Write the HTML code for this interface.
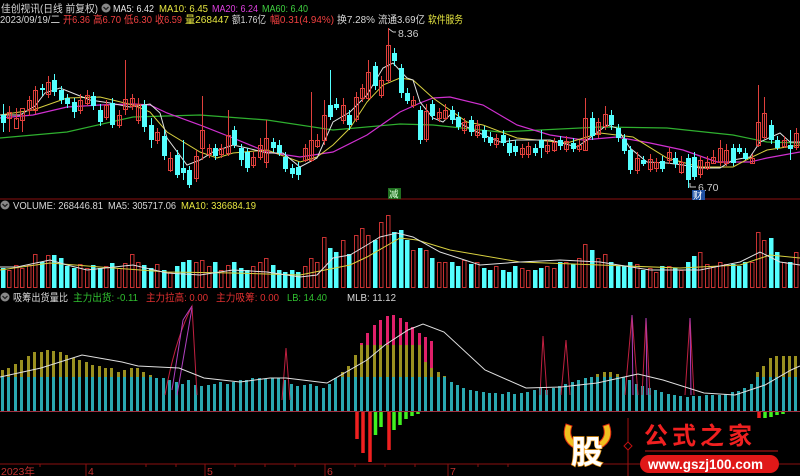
<!DOCTYPE html>
<html><head><meta charset="utf-8"><style>
html,body{margin:0;padding:0;background:#000;}
svg{display:block}
text{font-family:"Liberation Sans","Noto Sans CJK SC",sans-serif;font-size:10.5px}
.r{fill:none;stroke:#e0403c;stroke-width:1}
.c{fill:#54ffff}
.vr{fill:none;stroke:#c83232;stroke-width:1}
.vc{fill:#54ffff}
</style></head><body>
<svg width="800" height="476" viewBox="0 0 800 476" xmlns="http://www.w3.org/2000/svg">
<rect width="800" height="476" fill="#000"/>
<!-- headers -->
<text x="1" y="12" fill="#d8d8d8" textLength="97" lengthAdjust="spacingAndGlyphs">佳创视讯(日线 前复权)</text>
<circle cx="106" cy="8" r="4.5" fill="#888"/><path d="M103.5 7 L106 9.5 L108.5 7" stroke="#222" fill="none" stroke-width="1.3"/>
<text x="113" y="12" fill="#e8e8e8" textLength="41" lengthAdjust="spacingAndGlyphs">MA5: 6.42</text>
<text x="159" y="12" fill="#e6e640" textLength="49" lengthAdjust="spacingAndGlyphs">MA10: 6.45</text>
<text x="212" y="12" fill="#e040e0" textLength="46" lengthAdjust="spacingAndGlyphs">MA20: 6.24</text>
<text x="262" y="12" fill="#40d040" textLength="46" lengthAdjust="spacingAndGlyphs">MA60: 6.40</text>
<text x="0" y="23" fill="#d8d8d8" textLength="60" lengthAdjust="spacingAndGlyphs">2023/09/19/二</text>
<text x="63" y="23" fill="#f04040" textLength="27" lengthAdjust="spacingAndGlyphs">开6.36</text>
<text x="93" y="23" fill="#f04040" textLength="28" lengthAdjust="spacingAndGlyphs">高6.70</text>
<text x="124" y="23" fill="#f04040" textLength="28" lengthAdjust="spacingAndGlyphs">低6.30</text>
<text x="155" y="23" fill="#f04040" textLength="27" lengthAdjust="spacingAndGlyphs">收6.59</text>
<text x="185" y="23" fill="#e6e640" textLength="44" lengthAdjust="spacingAndGlyphs">量268447</text>
<text x="232" y="23" fill="#d8d8d8" textLength="34" lengthAdjust="spacingAndGlyphs">额1.76亿</text>
<text x="270" y="23" fill="#f04040" textLength="64" lengthAdjust="spacingAndGlyphs">幅0.31(4.94%)</text>
<text x="337" y="23" fill="#d8d8d8" textLength="38" lengthAdjust="spacingAndGlyphs">换7.28%</text>
<text x="378" y="23" fill="#d8d8d8" textLength="47" lengthAdjust="spacingAndGlyphs">流通3.69亿</text>
<text x="428" y="23" fill="#e6e640" textLength="35" lengthAdjust="spacingAndGlyphs">软件服务</text>

<!-- panel separators -->
<line x1="0" y1="199" x2="800" y2="199" stroke="#8a1010" stroke-width="1"/>
<line x1="0" y1="464" x2="800" y2="464" stroke="#8a1010" stroke-width="1"/>

<!-- MA lines main -->
<polyline fill="none" stroke="#2fb02f" stroke-width="1.2" points="0,138 67,132 133,117 200,115 267,120 333,130 400,124 433,125 500,132 600,127 667,128 733,135 767,142 800,143"/>
<polyline fill="none" stroke="#d030d0" stroke-width="1.2" points="0,118 33,115 67,107 100,105 133,104 150,105 167,113 200,125 233,138 267,152 300,157 333,152 367,135 400,112 420,103 433,98 450,97 483,105 517,125 550,135 583,140 617,137 650,143 683,150 717,162 750,162 767,158 800,152"/>
<polyline fill="none" stroke="#d8d040" stroke-width="1" points="0,115 33,110 67,98 100,97 133,105 150,112 167,132 200,152 217,158 233,153 267,150 300,162 317,157 333,145 350,128 367,102 383,85 400,78 413,80 433,98 467,122 483,125 517,138 567,143 600,133 633,137 667,158 700,167 733,167 750,158 767,150 800,145"/>
<polyline fill="none" stroke="#e0e0e0" stroke-width="1" points="0,115 20,115 35,106 45,93 60,88 70,92 90,100 110,103 130,107 150,104 160,113 167,138 187,165 200,160 213,152 233,145 247,148 267,153 283,153 300,167 317,158 333,122 350,112 367,95 383,68 393,63 407,78 413,80 420,102 433,118 443,122 450,115 463,125 477,132 500,142 517,140 550,140 577,147 587,140 607,125 617,128 630,148 647,162 667,163 683,165 700,168 720,168 733,160 750,157 760,142 780,133 790,142 800,142"/>

<!-- wicks -->
<path stroke="#e0403c" stroke-width="1" d="M9.5 106v26M16.5 108v12M22.5 114v18M29.5 96v20M35.5 86v28M48.5 76v22M80.5 94v20M87.5 90v16M106.5 100v20M119.5 110v18M125.5 60v55M132.5 94v16M138.5 98v26M157.5 128v16M170.5 152v20M196.5 150v32M202.5 96v64M209.5 144v14M221.5 144v14M228.5 110v46M253.5 152v16M260.5 138v22M266.5 120v48M305.5 144v18M311.5 92v70M317.5 134v14M324.5 100v45M343.5 98v26M356.5 92v30M362.5 84v18M368.5 60v40M381.5 76v22M388.5 28v55M413.5 96v12M426.5 104v38M439.5 108v14M445.5 104v16M464.5 118v16M477.5 120v18M496.5 134v14M522.5 144v14M528.5 142v16M547.5 140v14M554.5 138v14M566.5 136v16M579.5 140v12M585.5 98v52M598.5 118v20M605.5 106v24M637.5 152v22M650.5 154v18M656.5 158v14M669.5 148v16M681.5 156v18M700.5 156v22M707.5 156v14M713.5 150v14M720.5 140v26M726.5 144v22M752.5 154v10M758.5 85v62M764.5 97v42M784.5 136v12M796.5 128v22"/>
<path stroke="#54ffff" stroke-width="1" d="M3.5 104v28M42.5 84v12M54.5 74v22M61.5 86v18M67.5 94v14M74.5 98v20M93.5 92v18M100.5 104v22M112.5 98v30M144.5 100v32M151.5 118v30M164.5 130v30M177.5 150v28M183.5 140v40M189.5 166v22M215.5 144v16M234.5 126v22M241.5 144v22M247.5 148v24M273.5 138v14M279.5 140v16M285.5 152v20M292.5 164v14M298.5 162v18M330.5 70v50M336.5 98v12M349.5 110v20M375.5 62v28M394.5 48v18M401.5 64v34M407.5 88v16M420.5 106v38M432.5 100v20M452.5 106v18M458.5 112v18M471.5 116v20M484.5 126v16M490.5 132v14M503.5 130v16M509.5 138v18M515.5 140v16M535.5 144v12M541.5 130v28M560.5 136v14M573.5 138v14M592.5 112v28M611.5 110v20M618.5 124v18M624.5 134v20M630.5 146v28M643.5 156v10M662.5 156v16M675.5 152v16M688.5 154v34M694.5 152v28M733.5 144v22M739.5 144v10M745.5 148v12M771.5 120v24M777.5 136v14M790.5 130v30"/>
<!-- candle bodies -->
<g class="c"><rect x="1" y="115" width="5" height="8"/><rect x="40" y="88" width="5" height="2"/><rect x="52" y="80" width="5" height="12"/><rect x="59" y="90" width="5" height="10"/><rect x="65" y="98" width="5" height="6"/><rect x="72" y="102" width="5" height="10"/><rect x="91" y="96" width="5" height="10"/><rect x="98" y="110" width="5" height="12"/><rect x="110" y="103" width="5" height="22"/><rect x="142" y="105" width="5" height="22"/><rect x="149" y="125" width="5" height="15"/><rect x="162" y="136" width="5" height="20"/><rect x="175" y="155" width="5" height="20"/><rect x="181" y="168" width="5" height="5"/><rect x="187" y="170" width="5" height="15"/><rect x="213" y="148" width="5" height="8"/><rect x="232" y="130" width="5" height="15"/><rect x="239" y="148" width="5" height="12"/><rect x="245" y="152" width="5" height="16"/><rect x="271" y="142" width="5" height="6"/><rect x="277" y="145" width="5" height="8"/><rect x="283" y="157" width="5" height="12"/><rect x="290" y="168" width="5" height="6"/><rect x="296" y="167" width="5" height="8"/><rect x="328" y="105" width="5" height="12"/><rect x="334" y="104" width="5" height="4"/><rect x="347" y="115" width="5" height="10"/><rect x="373" y="66" width="5" height="20"/><rect x="392" y="53" width="5" height="8"/><rect x="399" y="68" width="5" height="25"/><rect x="405" y="93" width="5" height="8"/><rect x="418" y="110" width="5" height="30"/><rect x="430" y="104" width="5" height="12"/><rect x="450" y="110" width="5" height="10"/><rect x="456" y="117" width="5" height="10"/><rect x="469" y="120" width="5" height="12"/><rect x="482" y="130" width="5" height="8"/><rect x="488" y="137" width="5" height="6"/><rect x="501" y="135" width="5" height="8"/><rect x="507" y="143" width="5" height="10"/><rect x="513" y="146" width="5" height="6"/><rect x="533" y="148" width="5" height="5"/><rect x="539" y="140" width="5" height="8"/><rect x="558" y="140" width="5" height="6"/><rect x="571" y="143" width="5" height="6"/><rect x="590" y="118" width="5" height="18"/><rect x="609" y="115" width="5" height="10"/><rect x="616" y="128" width="5" height="10"/><rect x="622" y="139" width="5" height="12"/><rect x="628" y="150" width="5" height="20"/><rect x="641" y="160" width="5" height="4"/><rect x="660" y="161" width="5" height="8"/><rect x="673" y="158" width="5" height="6"/><rect x="686" y="158" width="5" height="22"/><rect x="692" y="157" width="5" height="20"/><rect x="731" y="148" width="5" height="15"/><rect x="737" y="148" width="5" height="4"/><rect x="743" y="153" width="5" height="6"/><rect x="769" y="125" width="5" height="15"/><rect x="775" y="140" width="5" height="8"/><rect x="788" y="145" width="5" height="4"/></g>
<g class="r"><rect x="7.5" y="112.5" width="4" height="6"/><rect x="14.5" y="118.5" width="4" height="10"/><rect x="20.5" y="108.5" width="4" height="12"/><rect x="27.5" y="100.5" width="4" height="10"/><rect x="33.5" y="90.5" width="4" height="20"/><rect x="46.5" y="82.5" width="4" height="12"/><rect x="78.5" y="100.5" width="4" height="10"/><rect x="85.5" y="95.5" width="4" height="8"/><rect x="104.5" y="105.5" width="4" height="12"/><rect x="117.5" y="115.5" width="4" height="10"/><rect x="123.5" y="99.5" width="4" height="10"/><rect x="130.5" y="98.5" width="4" height="8"/><rect x="136.5" y="104.5" width="4" height="16"/><rect x="155.5" y="132.5" width="4" height="8"/><rect x="168.5" y="158.5" width="4" height="12"/><rect x="194.5" y="156.5" width="4" height="22"/><rect x="200.5" y="130.5" width="4" height="18"/><rect x="207.5" y="148.5" width="4" height="6"/><rect x="219.5" y="148.5" width="4" height="6"/><rect x="226.5" y="135.5" width="4" height="18"/><rect x="251.5" y="157.5" width="4" height="8"/><rect x="258.5" y="145.5" width="4" height="12"/><rect x="264.5" y="138.5" width="4" height="24"/><rect x="303.5" y="148.5" width="4" height="12"/><rect x="309.5" y="140.5" width="4" height="20"/><rect x="315.5" y="140.5" width="4" height="6"/><rect x="322.5" y="115.5" width="4" height="25"/><rect x="341.5" y="105.5" width="4" height="15"/><rect x="354.5" y="97.5" width="4" height="22"/><rect x="360.5" y="88.5" width="4" height="10"/><rect x="366.5" y="72.5" width="4" height="26"/><rect x="379.5" y="80.5" width="4" height="15"/><rect x="386.5" y="45.5" width="4" height="35"/><rect x="411.5" y="100.5" width="4" height="5"/><rect x="424.5" y="111.5" width="4" height="28"/><rect x="437.5" y="112.5" width="4" height="6"/><rect x="443.5" y="110.5" width="4" height="8"/><rect x="462.5" y="122.5" width="4" height="8"/><rect x="475.5" y="125.5" width="4" height="10"/><rect x="494.5" y="138.5" width="4" height="6"/><rect x="520.5" y="148.5" width="4" height="6"/><rect x="526.5" y="146.5" width="4" height="8"/><rect x="545.5" y="145.5" width="4" height="6"/><rect x="552.5" y="142.5" width="4" height="8"/><rect x="564.5" y="141.5" width="4" height="8"/><rect x="577.5" y="145.5" width="4" height="4"/><rect x="583.5" y="118.5" width="4" height="32"/><rect x="596.5" y="122.5" width="4" height="12"/><rect x="603.5" y="114.5" width="4" height="12"/><rect x="635.5" y="158.5" width="4" height="12"/><rect x="648.5" y="159.5" width="4" height="10"/><rect x="654.5" y="162.5" width="4" height="6"/><rect x="667.5" y="152.5" width="4" height="8"/><rect x="679.5" y="162.5" width="4" height="10"/><rect x="698.5" y="160.5" width="4" height="14"/><rect x="705.5" y="162.5" width="4" height="6"/><rect x="711.5" y="157.5" width="4" height="6"/><rect x="718.5" y="148.5" width="4" height="14"/><rect x="724.5" y="150.5" width="4" height="13"/><rect x="750.5" y="158.5" width="4" height="5"/><rect x="756.5" y="122.5" width="4" height="23"/><rect x="762.5" y="113.5" width="4" height="24"/><rect x="782.5" y="140.5" width="4" height="6"/><rect x="794.5" y="133.5" width="4" height="14"/></g>
<!-- annotations -->
<path d="M389 29 l4 3 M393 32 h3" stroke="#ccc" fill="none"/>
<text x="398" y="37" fill="#ccc">8.36</text>
<path d="M690 183 v4 h6" stroke="#ccc" fill="none"/>
<text x="698" y="191" fill="#ccc">6.70</text>
<rect x="692" y="190" width="13" height="10" fill="#2050a0"/><text x="693" y="199" fill="#fff" style="font-size:9.5px">财</text>
<rect x="388" y="188" width="13" height="11" fill="#207020"/><text x="389" y="197.5" fill="#dfd" style="font-size:9.5px">减</text>

<!-- volume panel -->
<circle cx="5" cy="205" r="4.5" fill="#888"/><path d="M2.5 204 L5 206.5 L7.5 204" stroke="#222" fill="none" stroke-width="1.3"/>
<text x="13" y="209" fill="#d8d8d8" textLength="90" lengthAdjust="spacingAndGlyphs">VOLUME: 268446.81</text>
<text x="108" y="209" fill="#d8d8d8" textLength="68" lengthAdjust="spacingAndGlyphs">MA5: 305717.06</text>
<text x="181" y="209" fill="#e6e640" textLength="75" lengthAdjust="spacingAndGlyphs">MA10: 336684.19</text>
<g class="vc"><rect x="1" y="268" width="4.5" height="20"/><rect x="40" y="262" width="4.5" height="26"/><rect x="52" y="255" width="4.5" height="33"/><rect x="59" y="258" width="4.5" height="30"/><rect x="65" y="266" width="4.5" height="22"/><rect x="72" y="268" width="4.5" height="20"/><rect x="91" y="265" width="4.5" height="23"/><rect x="98" y="268" width="4.5" height="20"/><rect x="110" y="263" width="4.5" height="25"/><rect x="142" y="265" width="4.5" height="23"/><rect x="149" y="268" width="4.5" height="20"/><rect x="162" y="270" width="4.5" height="18"/><rect x="175" y="266" width="4.5" height="22"/><rect x="181" y="262" width="4.5" height="26"/><rect x="187" y="260" width="4.5" height="28"/><rect x="213" y="262" width="4.5" height="26"/><rect x="232" y="262" width="4.5" height="26"/><rect x="239" y="268" width="4.5" height="20"/><rect x="245" y="270" width="4.5" height="18"/><rect x="271" y="265" width="4.5" height="23"/><rect x="277" y="270" width="4.5" height="18"/><rect x="283" y="272" width="4.5" height="16"/><rect x="290" y="270" width="4.5" height="18"/><rect x="296" y="272" width="4.5" height="16"/><rect x="328" y="248" width="4.5" height="40"/><rect x="334" y="252" width="4.5" height="36"/><rect x="347" y="254" width="4.5" height="34"/><rect x="373" y="240" width="4.5" height="48"/><rect x="392" y="232" width="4.5" height="56"/><rect x="399" y="230" width="4.5" height="58"/><rect x="405" y="240" width="4.5" height="48"/><rect x="418" y="248" width="4.5" height="40"/><rect x="430" y="258" width="4.5" height="30"/><rect x="450" y="262" width="4.5" height="26"/><rect x="456" y="266" width="4.5" height="22"/><rect x="469" y="264" width="4.5" height="24"/><rect x="482" y="268" width="4.5" height="20"/><rect x="488" y="270" width="4.5" height="18"/><rect x="501" y="270" width="4.5" height="18"/><rect x="507" y="272" width="4.5" height="16"/><rect x="513" y="266" width="4.5" height="22"/><rect x="533" y="270" width="4.5" height="18"/><rect x="539" y="268" width="4.5" height="20"/><rect x="558" y="262" width="4.5" height="26"/><rect x="571" y="264" width="4.5" height="24"/><rect x="590" y="250" width="4.5" height="38"/><rect x="609" y="262" width="4.5" height="26"/><rect x="616" y="266" width="4.5" height="22"/><rect x="622" y="266" width="4.5" height="22"/><rect x="628" y="262" width="4.5" height="26"/><rect x="641" y="270" width="4.5" height="18"/><rect x="660" y="266" width="4.5" height="22"/><rect x="673" y="268" width="4.5" height="20"/><rect x="686" y="262" width="4.5" height="26"/><rect x="692" y="256" width="4.5" height="32"/><rect x="731" y="264" width="4.5" height="24"/><rect x="737" y="266" width="4.5" height="22"/><rect x="743" y="262" width="4.5" height="26"/><rect x="769" y="238" width="4.5" height="50"/><rect x="775" y="252" width="4.5" height="36"/><rect x="788" y="262" width="4.5" height="26"/></g>
<g class="vr"><rect x="7.5" y="270.5" width="3.5" height="17"/><rect x="14.5" y="265.5" width="3.5" height="22"/><rect x="20.5" y="268.5" width="3.5" height="19"/><rect x="27.5" y="265.5" width="3.5" height="22"/><rect x="33.5" y="254.5" width="3.5" height="33"/><rect x="46.5" y="255.5" width="3.5" height="32"/><rect x="78.5" y="264.5" width="3.5" height="23"/><rect x="85.5" y="268.5" width="3.5" height="19"/><rect x="104.5" y="266.5" width="3.5" height="21"/><rect x="117.5" y="268.5" width="3.5" height="19"/><rect x="123.5" y="263.5" width="3.5" height="24"/><rect x="130.5" y="254.5" width="3.5" height="33"/><rect x="136.5" y="262.5" width="3.5" height="25"/><rect x="155.5" y="264.5" width="3.5" height="23"/><rect x="168.5" y="272.5" width="3.5" height="15"/><rect x="194.5" y="262.5" width="3.5" height="25"/><rect x="200.5" y="260.5" width="3.5" height="27"/><rect x="207.5" y="266.5" width="3.5" height="21"/><rect x="219.5" y="270.5" width="3.5" height="17"/><rect x="226.5" y="265.5" width="3.5" height="22"/><rect x="251.5" y="266.5" width="3.5" height="21"/><rect x="258.5" y="262.5" width="3.5" height="25"/><rect x="264.5" y="258.5" width="3.5" height="29"/><rect x="303.5" y="266.5" width="3.5" height="21"/><rect x="309.5" y="258.5" width="3.5" height="29"/><rect x="315.5" y="262.5" width="3.5" height="25"/><rect x="322.5" y="237.5" width="3.5" height="50"/><rect x="341.5" y="240.5" width="3.5" height="47"/><rect x="354.5" y="235.5" width="3.5" height="52"/><rect x="360.5" y="228.5" width="3.5" height="59"/><rect x="366.5" y="235.5" width="3.5" height="52"/><rect x="379.5" y="222.5" width="3.5" height="65"/><rect x="386.5" y="215.5" width="3.5" height="72"/><rect x="411.5" y="250.5" width="3.5" height="37"/><rect x="424.5" y="250.5" width="3.5" height="37"/><rect x="437.5" y="262.5" width="3.5" height="25"/><rect x="443.5" y="262.5" width="3.5" height="25"/><rect x="462.5" y="260.5" width="3.5" height="27"/><rect x="475.5" y="262.5" width="3.5" height="25"/><rect x="494.5" y="266.5" width="3.5" height="21"/><rect x="520.5" y="268.5" width="3.5" height="19"/><rect x="526.5" y="270.5" width="3.5" height="17"/><rect x="545.5" y="266.5" width="3.5" height="21"/><rect x="552.5" y="268.5" width="3.5" height="19"/><rect x="564.5" y="262.5" width="3.5" height="25"/><rect x="577.5" y="258.5" width="3.5" height="29"/><rect x="583.5" y="244.5" width="3.5" height="43"/><rect x="596.5" y="258.5" width="3.5" height="29"/><rect x="603.5" y="254.5" width="3.5" height="33"/><rect x="635.5" y="264.5" width="3.5" height="23"/><rect x="648.5" y="268.5" width="3.5" height="19"/><rect x="654.5" y="272.5" width="3.5" height="15"/><rect x="667.5" y="266.5" width="3.5" height="21"/><rect x="679.5" y="270.5" width="3.5" height="17"/><rect x="698.5" y="252.5" width="3.5" height="35"/><rect x="705.5" y="264.5" width="3.5" height="23"/><rect x="711.5" y="266.5" width="3.5" height="21"/><rect x="718.5" y="262.5" width="3.5" height="25"/><rect x="724.5" y="264.5" width="3.5" height="23"/><rect x="750.5" y="262.5" width="3.5" height="25"/><rect x="756.5" y="232.5" width="3.5" height="55"/><rect x="762.5" y="240.5" width="3.5" height="47"/><rect x="782.5" y="262.5" width="3.5" height="25"/><rect x="794.5" y="252.5" width="3.5" height="35"/></g>
<polyline fill="none" stroke="#d8d040" stroke-width="1" points="0,270 50,263 100,267 167,272 233,273 300,275 350,265 367,257 400,238 417,240 450,250 520,262 600,265 680,268 740,265 770,255 800,258"/>
<polyline fill="none" stroke="#e0e0e0" stroke-width="1" points="0,267 17,267 50,260 67,265 87,270 133,265 167,273 200,275 233,270 267,272 300,277 317,275 333,258 350,255 367,245 380,237 397,233 413,237 440,252 480,265 520,262 560,260 600,262 650,270 700,270 740,262 760,252 780,262 800,265"/>

<!-- indicator panel -->
<circle cx="5" cy="297" r="4.5" fill="#888"/><path d="M2.5 296 L5 298.5 L7.5 296" stroke="#222" fill="none" stroke-width="1.3"/>
<text x="13" y="301" fill="#d8d8d8" textLength="55" lengthAdjust="spacingAndGlyphs">吸筹出货量比</text>
<text x="73" y="301" fill="#30c030" textLength="65" lengthAdjust="spacingAndGlyphs">主力出货: -0.11</text>
<text x="146" y="301" fill="#e03030" textLength="62" lengthAdjust="spacingAndGlyphs">主力拉高: 0.00</text>
<text x="216" y="301" fill="#e03030" textLength="63" lengthAdjust="spacingAndGlyphs">主力吸筹: 0.00</text>
<text x="287" y="301" fill="#30c030" textLength="40" lengthAdjust="spacingAndGlyphs">LB: 14.40</text>
<text x="347" y="301" fill="#d8d8d8" textLength="49" lengthAdjust="spacingAndGlyphs">MLB: 11.12</text>

<path stroke="#9a9020" stroke-width="3" d="M2.5 370V411M8.5 368V411M15.5 364V411M21.5 360V411M28.5 356V411M34.5 352V411M41.5 352V411M47.5 350V411M53.5 351V411M60.5 352V411M66.5 355V411M73.5 358V411M79.5 360V411M86.5 362V411M92.5 365V411M99.5 366V411M105.5 368V411M111.5 368V411M118.5 372V411M124.5 370V411M131.5 368V411M137.5 368V411M143.5 372V411M150.5 375V411M335.5 378V411M342.5 372V411M348.5 366V411M355.5 355V411M361.5 345V411M367.5 345V411M374.5 345V411M380.5 345V411M387.5 345V411M393.5 345V411M400.5 345V411M406.5 345V411M412.5 345V411M419.5 345V411M425.5 362V411M431.5 368V411M438.5 372V411M444.5 376V411M597.5 374V411M604.5 372V411M610.5 372V411M617.5 374V411M757.5 372V411M763.5 366V411M770.5 358V411M776.5 356V411M783.5 356V411M789.5 356V411M795.5 356V411"/>
<path stroke="#e0206a" stroke-width="3" d="M361.5 343V345M367.5 333V345M374.5 325V345M380.5 320V345M387.5 316V345M393.5 315V345M400.5 318V345M406.5 322V345M412.5 327V345M419.5 333V345M425.5 337V362M431.5 341V368"/>
<path stroke="#2aa8b0" stroke-width="3" d="M2.5 377V411M8.5 377V411M15.5 377V411M21.5 377V411M28.5 377V411M34.5 377V411M41.5 377V411M47.5 377V411M53.5 377V411M60.5 377V411M66.5 377V411M73.5 377V411M79.5 377V411M86.5 377V411M92.5 377V411M99.5 377V411M105.5 377V411M111.5 377V411M118.5 377V411M124.5 377V411M131.5 377V411M137.5 377V411M143.5 377V411M150.5 377V411M156.5 378V411M163.5 378V411M169.5 380V411M176.5 382V411M182.5 384V411M188.5 380V411M195.5 385V411M201.5 386V411M208.5 385V411M214.5 384V411M220.5 382V411M227.5 384V411M233.5 382V411M240.5 380V411M246.5 380V411M252.5 378V411M259.5 378V411M265.5 379V411M272.5 378V411M278.5 378V411M284.5 380V411M291.5 384V411M297.5 386V411M304.5 385V411M310.5 384V411M316.5 386V411M323.5 388V411M329.5 384V411M335.5 378V411M342.5 377V411M348.5 377V411M355.5 377V411M361.5 377V411M367.5 377V411M374.5 377V411M380.5 377V411M387.5 377V411M393.5 377V411M400.5 377V411M406.5 377V411M412.5 377V411M419.5 377V411M425.5 377V411M431.5 377V411M438.5 377V411M444.5 377V411M451.5 382V411M457.5 385V411M463.5 388V411M470.5 390V411M476.5 391V411M483.5 392V411M489.5 393V411M495.5 393V411M502.5 394V411M508.5 392V411M514.5 394V411M521.5 393V411M527.5 392V411M534.5 390V411M540.5 388V411M546.5 390V411M553.5 388V411M559.5 386V411M565.5 384V411M572.5 382V411M578.5 380V411M585.5 378V411M591.5 377V411M597.5 377V411M604.5 377V411M610.5 377V411M617.5 377V411M623.5 377V411M629.5 380V411M636.5 384V411M642.5 386V411M649.5 388V411M655.5 390V411M661.5 392V411M668.5 394V411M674.5 395V411M680.5 396V411M687.5 397V411M693.5 396V411M699.5 396V411M706.5 395V411M712.5 395V411M719.5 395V411M725.5 394V411M732.5 392V411M738.5 391V411M744.5 388V411M751.5 384V411M757.5 377V411M763.5 377V411M770.5 377V411M776.5 377V411M783.5 377V411M789.5 377V411M795.5 377V411"/>
<line x1="0" y1="411.5" x2="800" y2="411.5" stroke="#a03040" stroke-width="1"/>
<!-- spikes -->
<path fill="none" stroke="#c02040" stroke-width="1" d="M165 395 Q175 340 192 306 L197 395 M282 400 L286 348 L290 400 M540 395 L543 336 L547 395 M561 395 L566 340 L570 395 M625 395 L632 315 L638 395 M642 395 L646 318 L650 395 M685 395 L690 318 L694 395"/>
<path fill="none" stroke="#b040c0" stroke-width="1" d="M172 390 L183 320 L192 306 M177 395 L192 308 M632 315 L633 395 M646 318 L647 395 M690 318 L691 395"/>
<!-- negative bars -->
<path stroke="#f02020" stroke-width="3.5" d="M357 412V439M363 412V453M370 412V462M389 412V450M759 412V418"/>
<path stroke="#40f020" stroke-width="3.5" d="M375.5 412V435M381 412V427M394 412V430M400 412V425M406 412V419M412 412V416M418 412V414M765 412V418M771 412V417M777 412V415M783 412V414"/>
<polyline fill="none" stroke="#e0e0e0" stroke-width="1" points="0,377 41,368 82,355 122,362 138,366 179,368 204,378 240,382 270,378 286,378 327,383 367,360 385,345 408,330 423,324 444,332 485,370 526,388 561,387 597,383 638,374 663,380 704,393 735,395 765,385 791,370 800,366"/>

<!-- date axis -->
<path stroke="#8a1010" stroke-width="1" d="M86 464v12M205 464v12M325 464v12M448 464v12M40 464v3M146 464v3M176 464v3M235 464v3M265 464v3M295 464v3M355 464v3M385 464v3M415 464v3M478 464v3M508 464v3"/>
<text x="1" y="475" fill="#c03030">2023年</text>
<text x="88" y="475" fill="#c03030">4</text>
<text x="207" y="475" fill="#c03030">5</text>
<text x="327" y="475" fill="#c03030">6</text>
<text x="450" y="475" fill="#c03030">7</text>

<!-- logo -->
<path d="M566 424 Q560 440 574 448 L576 442 Q568 436 572 426Z" fill="#f0c020" stroke="#e03010"/>
<path d="M609 424 Q615 440 601 448 L599 442 Q607 436 603 426Z" fill="#f0c020" stroke="#e03010"/>
<text x="571" y="463" fill="#fff" stroke="#f0a020" stroke-width="1.5" paint-order="stroke" style="font-size:32px;font-weight:bold">股</text>
<line x1="628" y1="418" x2="628" y2="476" stroke="#a01010"/>
<path d="M628 442 l4 4 l-4 4 l-4 -4z" fill="#000" stroke="#c01010"/>
<text x="644" y="444" fill="#f02020" style="font-size:24px;font-weight:bold;letter-spacing:4px">公式之家</text>
<line x1="645" y1="451" x2="778" y2="451" stroke="#801010" stroke-width="1.5"/>
<rect x="640" y="455" width="139" height="18" rx="9" fill="#e01818"/>
<text x="648" y="469" fill="#fff" style="font-size:13.5px;font-weight:bold">www.gszj100.com</text>
</svg>
</body></html>
